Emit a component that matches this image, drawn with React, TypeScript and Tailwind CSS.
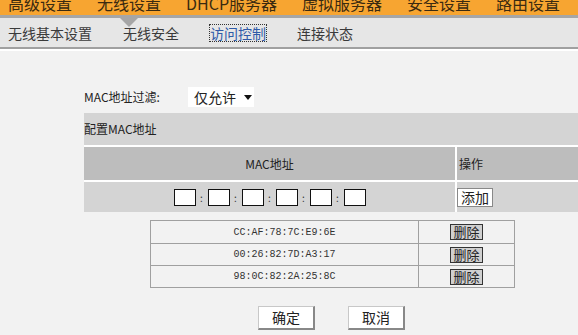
import React from "react";

const topItems = ["高级设置", "无线设置", "DHCP服务器", "虚拟服务器", "安全设置", "路由设置"];
const subItems = ["无线基本设置", "无线安全", "访问控制", "连接状态"];
const macs = ["CC:AF:78:7C:E9:6E", "00:26:82:7D:A3:17", "98:0C:82:2A:25:8C"];

export default function App() {
  return (
    <div className="w-[578px] h-[335px] overflow-hidden bg-[#f2f2f2] text-[#222] font-['Noto_Sans_CJK_SC',sans-serif]">
      {/* TOP NAV */}
      <div className="h-[15px] bg-[#f7a531] overflow-hidden">
        <div className="-mt-[7px] h-[20px] flex items-center pl-[8px] gap-[25px] text-[16px] leading-[20px] text-[#3a2a10]">
          {topItems.map((t) => (
            <span key={t} className="whitespace-nowrap">{t}</span>
          ))}
        </div>
      </div>

      {/* SUB NAV */}
      <div className="h-[3px] bg-[#a6a6a6]" />
      <div className="relative h-[29px] bg-[#e6e6e6] flex items-center pl-[8px] gap-[31px] text-[14px] text-[#3a3a3a]">
        <svg className="absolute left-[120px] top-0" width="18" height="9" viewBox="0 0 18 9">
          <polygon points="0,0 18,0 9,9" fill="#a6a6a6" />
        </svg>
        {subItems.map((t, i) => (
          <span
            key={t}
            className={
              i === 2
                ? "text-[#2f5aa8] outline-1 outline-dotted outline-[#333] leading-[16px]"
                : "leading-[16px]"
            }
          >
            {t}
          </span>
        ))}
      </div>
      <div className="h-[2px] bg-[#a0a0a0]" />
      <div className="h-[2px] bg-white" />

      {/* CONTENT */}
      <div className="pl-[84px]">
        <div className="h-[62px] flex items-center pt-[32px] pb-[2px]">
          <span className="text-[12px] w-[104px]">MAC地址过滤:</span>
          <div className="h-[20px] w-[66px] bg-white flex items-center pl-[6px] gap-[8px] text-[14px]">
            <span>仅允许</span>
            <svg width="8" height="5" viewBox="0 0 8 5">
              <polygon points="0,0 8,0 4,5" fill="#111" />
            </svg>
          </div>
        </div>

        <div className="h-[32px] bg-[#d4d4d4] flex items-center text-[12px]">配置MAC地址</div>
        <div className="h-[2px] bg-white" />
        <div className="h-[33px] bg-[#bdbdbd] flex text-[12px]">
          <div className="w-[371px] flex items-center justify-center">MAC地址</div>
          <div className="w-[2px] bg-white" />
          <div className="flex items-center pl-[2px]">操作</div>
        </div>
        <div className="h-[2px] bg-white" />
        <div className="h-[30px] bg-[#d4d4d4] flex">
          <div className="w-[371px] flex items-center justify-center">
            {[0, 1, 2, 3, 4, 5].map((i) => (
              <React.Fragment key={i}>
                {i > 0 && <span className="w-[12px] text-center text-[10px] leading-[17px] text-[#333]">:</span>}
                <div className="w-[22px] h-[17px] bg-white border border-[#111]" />
              </React.Fragment>
            ))}
          </div>
          <div className="w-[2px] bg-white" />
          <div className="flex items-center">
            <div className="h-[19px] px-[3px] bg-white border border-[#888] text-[14px] leading-[17px] flex items-center">添加</div>
          </div>
        </div>

        {/* LIST */}
        <div className="ml-[66px] mt-[8px] w-[365px] border border-[#a0a0a0]">
          {macs.map((m, i) => (
            <div key={m} className={"h-[22px] flex " + (i > 0 ? "border-t border-[#a0a0a0]" : "")}>
              <div className="w-[268px] flex items-center justify-center text-[10px] font-['Liberation_Mono',monospace] text-[#333] border-r border-[#a0a0a0]">
                {m}
              </div>
              <div className="flex-1 flex items-center pl-[31px]">
                <div className="h-[16px] w-[33px] bg-[#d0d0d0] border border-[#333] text-[13px] leading-[14px] flex items-center justify-center">
                  删除
                </div>
              </div>
            </div>
          ))}
        </div>

        {/* BUTTONS */}
        <div className="mt-[18px] flex pl-[174px] gap-[33px]">
          <div className="w-[57px] h-[24px] bg-white border border-[#c8c8c8] border-r-2 border-b-2 border-r-[#888] border-b-[#888] text-[14px] flex items-center justify-center">
            确定
          </div>
          <div className="w-[57px] h-[24px] bg-white border border-[#c8c8c8] border-r-2 border-b-2 border-r-[#888] border-b-[#888] text-[14px] flex items-center justify-center">
            取消
          </div>
        </div>
      </div>
    </div>
  );
}
